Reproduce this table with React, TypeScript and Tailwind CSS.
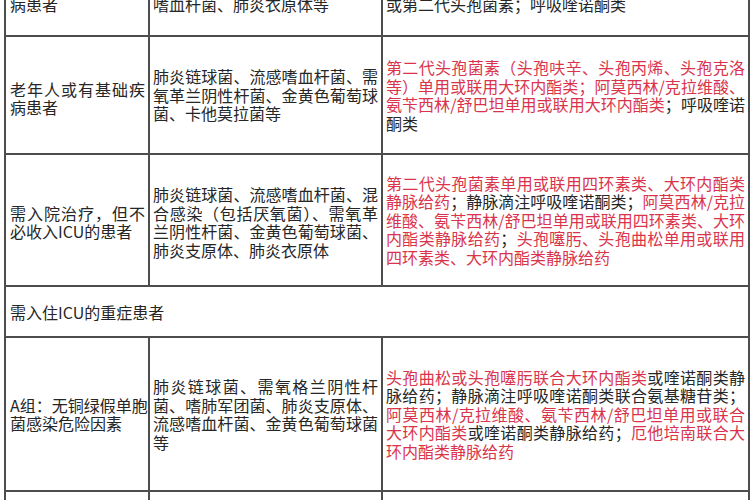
import type { ReactNode } from 'react';

const R = ({ children }: { children: ReactNode }) => (
  <span className="text-[#d9344c]">{children}</span>
);

// one printed line of a cell; every line but the last is spread to the full width
function Lines({ lines }: { lines: ReactNode[] }) {
  return (
    <>
      {lines.map((line, i) => (
        <div
          key={i}
          className={
            i < lines.length - 1
              ? 'whitespace-nowrap text-justify [text-align-last:justify]'
              : 'whitespace-nowrap'
          }
        >
          {line}
        </div>
      ))}
    </>
  );
}

const cell = 'overflow-hidden border-2 border-[#4d4d4d] px-[3px] align-middle';

export default function App() {
  return (
    <div className="h-[500px] w-[750px] overflow-hidden bg-white">
      <div className="-mt-[65px] pl-[4px]">
        <table
          className="w-[744px] table-fixed border-collapse text-[16px] leading-[18.5px] tracking-[0px] text-[#262626]"
          style={{ fontFamily: '"Noto Sans CJK SC", "Liberation Sans", sans-serif' }}
        >
          <colgroup>
            <col className="w-[144px]" />
            <col className="w-[233px]" />
            <col className="w-[367px]" />
          </colgroup>
          <tbody>
            <tr className="h-[100px]">
              <td className={`${cell} !align-bottom pb-[22px] pl-[4px]`}>
                <Lines lines={['青壮年、无基础疾', '病患者']} />
              </td>
              <td className={`${cell} !align-bottom pb-[22px]`}>
                <Lines lines={['肺炎链球菌、肺炎支原体、流感', '嗜血杆菌、肺炎衣原体等']} />
              </td>
              <td className={`${cell} !align-bottom pb-[22px]`}>
                <Lines
                  lines={[
                    '青霉素类；多西环素；大环内酯类；第一代',
                    '或第二代头孢菌素；呼吸喹诺酮类',
                  ]}
                />
              </td>
            </tr>

            <tr className="h-[118px]">
              <td className={`${cell} pl-[4px] pt-[6px]`}>
                <Lines lines={['老年人或有基础疾', '病患者']} />
              </td>
              <td className={cell}>
                <Lines
                  lines={[
                    '肺炎链球菌、流感嗜血杆菌、需',
                    '氧革兰阴性杆菌、金黄色葡萄球',
                    '菌、卡他莫拉菌等',
                  ]}
                />
              </td>
              <td className={cell}>
                <Lines
                  lines={[
                    <R>第二代头孢菌素（头孢呋辛、头孢丙烯、头孢克洛</R>,
                    <R>等）单用或联用大环内酯类；阿莫西林/克拉维酸、</R>,
                    <>
                      <R>氨苄西林/舒巴坦单用或联用大环内酯类</R>；呼吸喹诺
                    </>,
                    '酮类',
                  ]}
                />
              </td>
            </tr>

            <tr className="h-[132px]">
              <td className={`${cell} pl-[4px] pt-[4px]`}>
                <Lines lines={['需入院治疗，但不', '必收入ICU的患者']} />
              </td>
              <td className={`${cell} pt-[4px]`}>
                <Lines
                  lines={[
                    '肺炎链球菌、流感嗜血杆菌、混',
                    '合感染（包括厌氧菌）、需氧革',
                    '兰阴性杆菌、金黄色葡萄球菌、',
                    '肺炎支原体、肺炎衣原体',
                  ]}
                />
              </td>
              <td className={cell}>
                <Lines
                  lines={[
                    <R>第二代头孢菌素单用或联用四环素类、大环内酯类</R>,
                    <>
                      <R>静脉给药</R>；静脉滴注呼吸喹诺酮类；<R>阿莫西林/克拉</R>
                    </>,
                    <R>维酸、氨苄西林/舒巴坦单用或联用四环素类、大环</R>,
                    <>
                      <R>内酯类静脉给药</R>；<R>头孢噻肟、头孢曲松单用或联用</R>
                    </>,
                    <R>四环素类、大环内酯类静脉给药</R>,
                  ]}
                />
              </td>
            </tr>

            <tr className="h-[51px]">
              <td colSpan={3} className={`${cell} pl-[4px] pt-[2px]`}>
                需入住ICU的重症患者
              </td>
            </tr>

            <tr className="h-[154px]">
              <td className={`${cell} pl-[4px]`}>
                <Lines lines={['A组：无铜绿假单胞', '菌感染危险因素']} />
              </td>
              <td className={cell}>
                <Lines
                  lines={[
                    '肺炎链球菌、需氧格兰阴性杆',
                    '菌、嗜肺军团菌、肺炎支原体、',
                    '流感嗜血杆菌、金黄色葡萄球菌',
                    '等',
                  ]}
                />
              </td>
              <td className={cell}>
                <Lines
                  lines={[
                    <>
                      <R>头孢曲松或头孢噻肟联合大环内酯类</R>或喹诺酮类静
                    </>,
                    '脉给药；静脉滴注呼吸喹诺酮类联合氨基糖苷类；',
                    <R>阿莫西林/克拉维酸、氨苄西林/舒巴坦单用或联合</R>,
                    <>
                      <R>大环内酯类</R>或喹诺酮类静脉给药；<R>厄他培南联合大</R>
                    </>,
                    <R>环内酯类静脉给药</R>,
                  ]}
                />
              </td>
            </tr>

            <tr className="h-[80px]">
              <td className={`${cell} pl-[4px]`}>
                <Lines lines={['B组：有铜绿假单胞', '菌感染危险因素']} />
              </td>
              <td className={cell}>
                <Lines lines={['A组常见病原体＋铜绿假单胞菌']} />
              </td>
              <td className={cell}>
                <Lines lines={['具有抗假单胞菌活性的β内酰胺类抗生素']} />
              </td>
            </tr>
          </tbody>
        </table>
      </div>
    </div>
  );
}
